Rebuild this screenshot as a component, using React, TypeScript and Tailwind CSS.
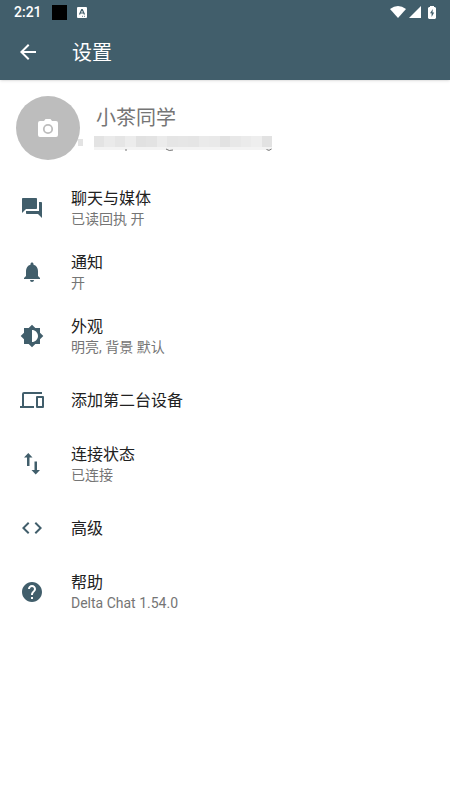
import React from 'react';
import {
  MdArrowBack,
  MdBrightness6,
  MdCode,
  MdForum,
  MdHelp,
  MdNotifications,
} from 'react-icons/md';

interface IconProps {
  className?: string;
}

const DevicesIcon: React.FC<IconProps> = ({ className }) => (
  <svg viewBox="0 0 24 24" fill="currentColor" className={className}>
    <path d="M4 6h18V4H4a2 2 0 0 0-2 2v12H0v2h14v-2H4V6z" />
    <path fillRule="evenodd" d="M17 8h6a1 1 0 0 1 1 1v10a1 1 0 0 1-1 1h-6a1 1 0 0 1-1-1V9a1 1 0 0 1 1-1zm1 2v8h4v-8h-4z" />
  </svg>
);

const ArrowsIcon: React.FC<IconProps> = ({ className }) => (
  <svg viewBox="0 0 24 24" fill="currentColor" className={className}>
    <path d="M8.3 1 4 5.5h3V14h2.5V5.5h3L8.3 1z" />
    <path d="M15.7 22.5 20 18h-3V9.5h-2.5V18h-3l4.2 4.5z" />
  </svg>
);

const settings = [
  { icon: MdForum, title: '聊天与媒体', summary: '已读回执 开' },
  { icon: MdNotifications, title: '通知', summary: '开' },
  { icon: MdBrightness6, title: '外观', summary: '明亮, 背景 默认' },
  { icon: DevicesIcon, title: '添加第二台设备' },
  { icon: ArrowsIcon, title: '连接状态', summary: '已连接' },
  { icon: MdCode, title: '高级' },
  { icon: MdHelp, title: '帮助', summary: 'Delta Chat 1.54.0' },
];

interface SettingRowProps {
  icon: React.ElementType;
  title: string;
  summary?: string;
}

const SettingRow: React.FC<SettingRowProps> = ({ icon: Icon, title, summary }) => (
  <li>
    <button type="button" className="flex h-16 w-full items-center px-5 text-left">
      <Icon className="h-6 w-6 shrink-0 text-[#415e6b]" />
      <span className="ml-[27px] flex flex-col pt-0.5">
        <span className="text-base leading-5 text-[#212121]">{title}</span>
        {summary && <span className="text-sm leading-5 text-[#757575]">{summary}</span>}
      </span>
    </button>
  </li>
);

const StatusBar = () => (
  <div className="flex h-6 items-center px-3.5 text-white">
    <span className="text-sm font-medium">2:21</span>
    <span className="ml-2.5 h-[15px] w-[15px] bg-black" />
    <svg viewBox="0 0 10 11" className="ml-2.5 h-[11px] w-2.5">
      <rect width="10" height="11" rx="1" fill="#fff" />
      <path d="M2.5 7.5 4.7 2.5h.6l2.2 5M3.5 6h3" fill="none" stroke="#415e6b" strokeWidth="1.2" />
      <path d="M5 9.3h1M7 9.3h1" stroke="#415e6b" strokeWidth="0.8" />
    </svg>
    <div className="ml-auto flex items-center gap-[3px]">
      <svg viewBox="0 0 16 12" className="h-3 w-4" fill="currentColor">
        <path d="M0 3Q8-3 16 3L8 12z" />
      </svg>
      <svg viewBox="0 0 12 12" className="h-3 w-3" fill="currentColor">
        <path d="M12 0v12H0z" />
      </svg>
      <svg viewBox="0 0 8 13" className="ml-1 h-[13px] w-2" fill="currentColor">
        <path d="M2 0h4v1h1l1 1v10l-1 1H1l-1-1V2l1-1h1z" />
        <path d="M4.8 3 2 7.3h1.6V11L6.2 6.5H4.5z" fill="#415e6b" />
      </svg>
    </div>
  </div>
);

// Tiles that hide the account address
const maskTiles = [
  'bg-[#e3e3e3]', 'bg-[#eaeaea]', 'bg-[#e5e5e5]', 'bg-[#ececec]',
  'bg-[#e1e1e1]', 'bg-[#e3e3e3]', 'bg-[#ebebeb]', 'bg-[#e5e5e5]',
  'bg-[#e6e6e6]', 'bg-[#e5e5e5]', 'bg-[#eaeaea]', 'bg-[#e9e9e9]',
  'bg-[#e2e2e2]', 'bg-[#e8e8e8]', 'bg-[#ebebeb]', 'bg-[#eeeeee]',
  'bg-[#e2e2e2]',
];

const Profile = () => (
  <button type="button" className="flex w-full items-start px-4 pt-4 pb-3 text-left">
    <span className="relative flex h-16 w-16 shrink-0 items-center justify-center rounded-full bg-[#bdbdbd]">
      <svg viewBox="0 0 20 18" className="h-[18px] w-5">
        <path d="M2 2h4l1.5-2h5L14 2h4a2 2 0 0 1 2 2v12a2 2 0 0 1-2 2H2a2 2 0 0 1-2-2V4a2 2 0 0 1 2-2z" fill="#fff" />
        <circle cx="10" cy="10" r="4.2" fill="none" stroke="#bdbdbd" strokeWidth="1.8" />
      </svg>
      <span className="absolute top-[43px] left-[62px] h-[7px] w-[5px] bg-[#e3e3e3]" />
    </span>
    <span className="ml-3.5 flex flex-col">
      <span className="mt-2.5 pl-0.5 text-xl leading-6 text-[#757575]">小茶同学</span>
      <span className="mt-1.5 flex h-[11px] w-[178px]">
        {maskTiles.map((tile, index) => (
          <span key={index} className={`h-full flex-1 ${tile}`} />
        ))}
      </span>
      {/* Descenders that show below the tiles */}
      <svg viewBox="0 0 180 6" className="h-1.5 w-[180px]" fill="none" stroke="#757575">
        <path d="M0 1.5h178" stroke="#f3f3f3" strokeWidth="3" />
        <path d="M32 2v2" />
        <path d="M72 2q3 2.5 7 1M172.500 2.500q2.500 2 5-.5" />
      </svg>
    </span>
  </button>
);

const App = () => (
  <div className="min-h-screen bg-white font-[Roboto,'Noto_Sans_CJK_SC',sans-serif]">
    <header className="bg-[#415e6b] text-white shadow-sm">
      <StatusBar />
      <div className="flex h-14 items-center px-4">
        <button type="button" aria-label="返回">
          <MdArrowBack className="h-6 w-6" />
        </button>
        <h1 className="ml-8 pt-0.5 text-xl">设置</h1>
      </div>
    </header>
    <main>
      <Profile />
      <ul className="mt-1">
        {settings.map((item) => (
          <SettingRow key={item.title} {...item} />
        ))}
      </ul>
    </main>
  </div>
);

export default App;
